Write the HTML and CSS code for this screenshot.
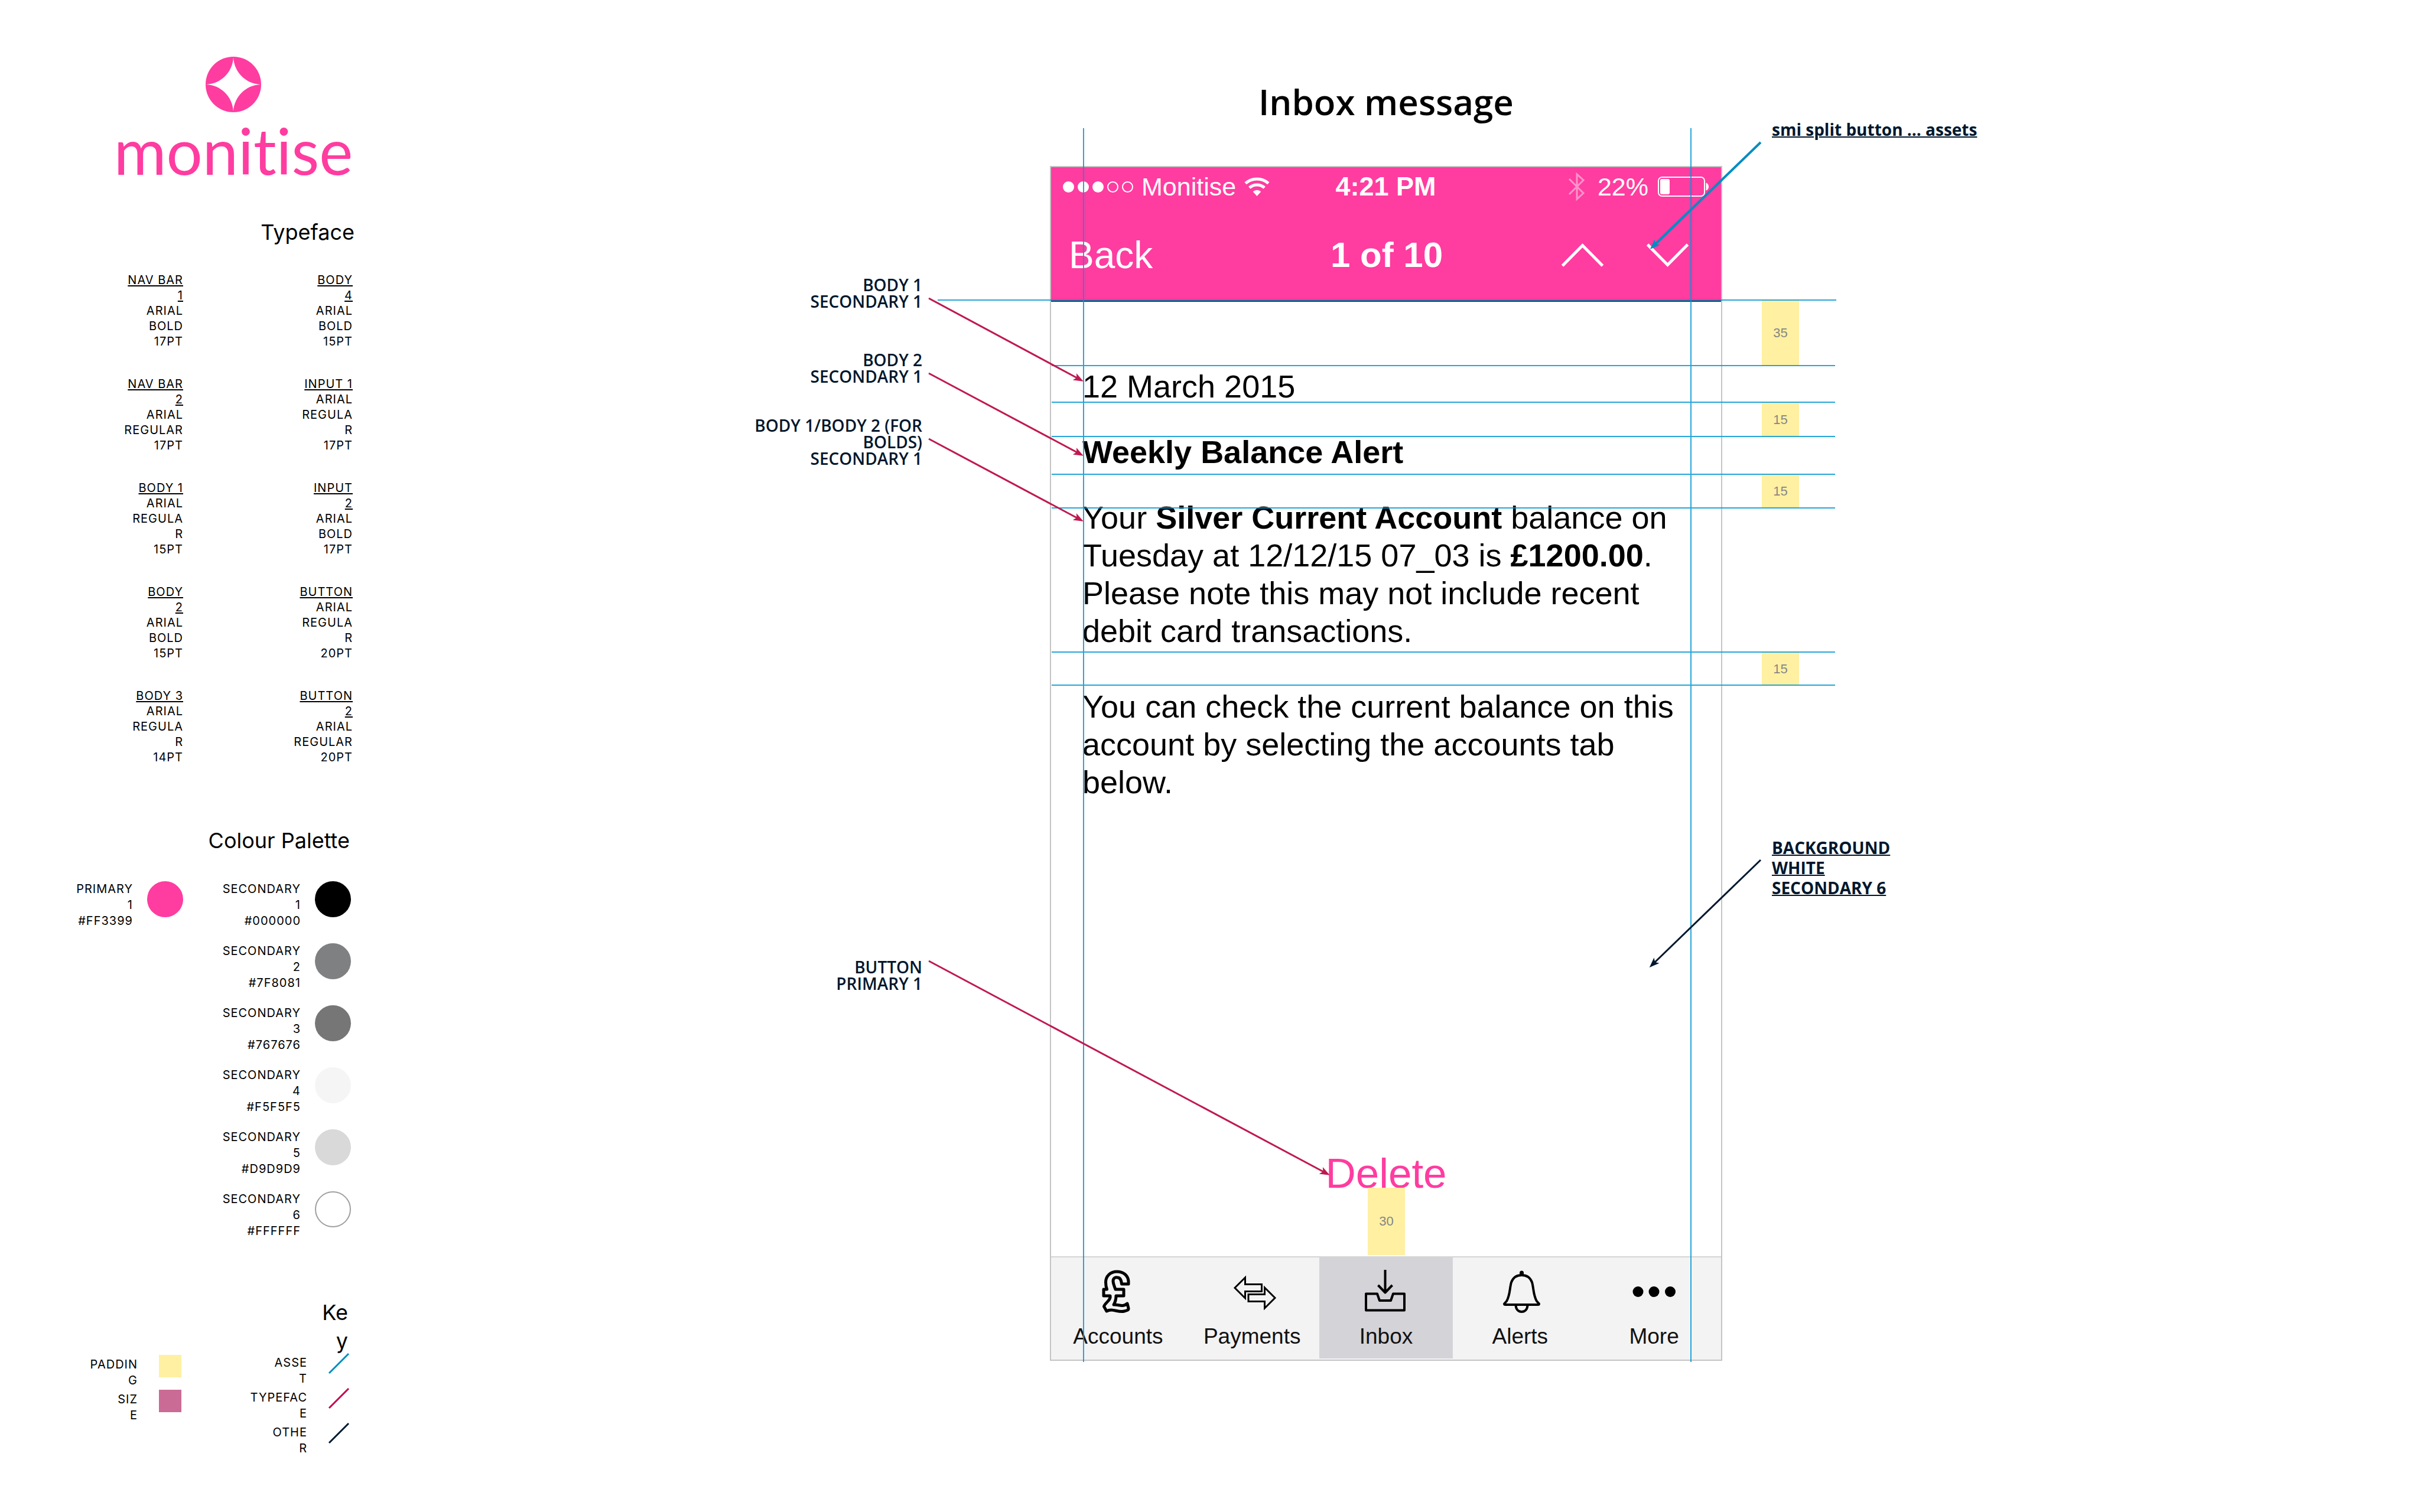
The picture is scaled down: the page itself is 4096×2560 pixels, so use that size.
FILE: index.html
```html
<!DOCTYPE html>
<html lang="en">
<head>
<meta charset="utf-8">
<title>Inbox message</title>
<link rel="stylesheet" href="styles.css">
</head>
<body>
<aside class="guide">
  <div class="brand">
    <svg class="brand-mark" viewBox="0 0 94 94" aria-hidden="true"><circle cx="47" cy="47" r="47"/><path d="M47 1C48 26 68 46 93 47C68 48 48 68 47 93C46 68 26 48 1 47C26 46 46 26 47 1Z"/></svg>
    <div class="brand-name">monitise</div>
  </div>

  <section class="typeface">
    <h2>Typeface</h2>
    <div class="specimens">
      <p><u>NAV BAR<br>1</u><br>ARIAL<br>BOLD<br>17PT</p>
      <p><u>BODY<br>4</u><br>ARIAL<br>BOLD<br>15PT</p>
      <p><u>NAV BAR<br>2</u><br>ARIAL<br>REGULAR<br>17PT</p>
      <p><u>INPUT 1</u><br>ARIAL<br>REGULA<br>R<br>17PT</p>
      <p><u>BODY 1</u><br>ARIAL<br>REGULA<br>R<br>15PT</p>
      <p><u>INPUT<br>2</u><br>ARIAL<br>BOLD<br>17PT</p>
      <p><u>BODY<br>2</u><br>ARIAL<br>BOLD<br>15PT</p>
      <p><u>BUTTON</u><br>ARIAL<br>REGULA<br>R<br>20PT</p>
      <p><u>BODY 3</u><br>ARIAL<br>REGULA<br>R<br>14PT</p>
      <p><u>BUTTON<br>2</u><br>ARIAL<br>REGULAR<br>20PT</p>
    </div>
  </section>

  <section class="palette">
    <h2>Colour Palette</h2>
    <div class="swatches">
      <ul>
        <li><p>PRIMARY<br>1<br>#FF3399</p><span class="dot primary-1"></span></li>
      </ul>
      <ul>
        <li><p>SECONDARY<br>1<br>#000000</p><span class="dot secondary-1"></span></li>
        <li><p>SECONDARY<br>2<br>#7F8081</p><span class="dot secondary-2"></span></li>
        <li><p>SECONDARY<br>3<br>#767676</p><span class="dot secondary-3"></span></li>
        <li><p>SECONDARY<br>4<br>#F5F5F5</p><span class="dot secondary-4"></span></li>
        <li><p>SECONDARY<br>5<br>#D9D9D9</p><span class="dot secondary-5"></span></li>
        <li><p>SECONDARY<br>6<br>#FFFFFF</p><span class="dot secondary-6"></span></li>
      </ul>
    </div>
  </section>

  <section class="key">
    <h2>Ke<br>y</h2>
    <div class="key-columns">
      <ul class="key-boxes">
        <li><p>PADDIN<br>G</p><span class="box box-padding"></span></li>
        <li><p>SIZ<br>E</p><span class="box box-size"></span></li>
      </ul>
      <ul>
        <li><p>ASSE<br>T</p><svg class="stroke stroke-asset" viewBox="0 0 35 35"><path d="M1 31L34 -2"/></svg></li>
        <li><p>TYPEFAC<br>E</p><svg class="stroke stroke-typeface" viewBox="0 0 35 35"><path d="M1 31L34 -2"/></svg></li>
        <li><p>OTHE<br>R</p><svg class="stroke stroke-other" viewBox="0 0 35 35"><path d="M1 31L34 -2"/></svg></li>
      </ul>
    </div>
  </section>
</aside>

<main class="board">
  <h1>Inbox message</h1>
  <div class="stage">
    <div class="phone">
      <header class="phone-header">
        <div class="status">
          <div class="status-left">
            <div class="signal"><i class="on"></i><i class="on"></i><i class="on"></i><i></i><i></i></div>
            <span>Monitise</span>
            <svg class="wifi" viewBox="0 0 43 33" aria-hidden="true"><path class="arc" d="M2.1 10.4A29 29 0 0 1 40.9 10.4M8.8 17.9A19 19 0 0 1 34.2 17.9"/><path class="core" d="M21.5 32L14.6 24.4A10.4 10.4 0 0 1 28.4 24.4Z"/></svg>
          </div>
          <span class="clock">4:21 PM</span>
          <div class="status-right">
            <svg class="bluetooth" viewBox="0 0 28 48" aria-hidden="true"><path d="M2 11L26 35L15 45V3L26 13L2 37"/></svg>
            <span class="charge">22%</span>
            <svg class="battery" viewBox="0 0 86 34" aria-hidden="true"><rect class="shell" x="1" y="1" width="78" height="32" rx="6"/><rect class="level" x="4" y="4" width="16" height="26" rx="3"/><path class="level" d="M81.500 10.500C84 11 86 14 86 17S84 23 81.500 23.500Z"/></svg>
          </div>
        </div>
        <div class="navbar">
          <button class="back" type="button">Back</button>
          <span class="count">1 of 10</span>
          <div class="split">
            <button type="button" aria-label="Previous message"><svg viewBox="0 0 73 40"><path d="M2.500 38L36.500 3.500L70.500 38"/></svg></button>
            <button type="button" aria-label="Next message"><svg viewBox="0 0 73 40"><path d="M2.500 2L36.500 36.500L70.500 2"/></svg></button>
          </div>
        </div>
      </header>
      <article class="message">
        <p>12 March 2015</p>
        <p class="subject">Weekly Balance Alert</p>
        <p>Your <b>Silver Current Account</b> balance on<br>Tuesday at 12/12/15 07_03 is <b>£1200.00</b>.<br>Please note this may not include recent<br>debit card transactions.</p>
        <p class="footnote">You can check the current balance on this<br>account by selecting the accounts tab<br>below.</p>
        <button class="delete" type="button">Delete</button>
      </article>
      <nav class="tabs">
        <button type="button"><svg class="icon icon-pound" viewBox="0 0 80 72"><path d="M58 23V18C57 8 49 2 38.500 2C27 2 19.500 10 19.500 20C19.500 25 20 28 21.500 32H16V43H27C29 50 18 55 16.500 61L21 69C31 63 40 72 51 69C56 68 58.500 67 58 64L56 56C48 63 41 57 33 58C36 53 37 48 37 43H50V32H36C34 27 32 22 32 18C32 13 36 11 39 12C44 12 46 17 46.500 23Z"/></svg><span>Accounts</span></button>
        <button type="button"><svg class="icon icon-transfer" viewBox="0 0 80 72"><path d="M11 29.500L28.500 12V23.500H56.500V35.500H28.500V47ZM34 40.500H61.500V29L79 46.500L61.500 64V52.500H34Z"/></svg><span>Payments</span></button>
        <button type="button" class="selected"><svg class="icon icon-inbox" viewBox="0 0 80 72"><path d="M38.500 -1V37M26.500 25L38.500 37.500L50.500 25M6 39.500H25L29 51H48L52 39.500H71V67.500H6Z"/></svg><span>Inbox</span></button>
        <button type="button"><svg class="icon icon-bell" viewBox="0 0 80 72"><path d="M42.500 8C33 8 28 12 25 20C22 30 23 42 17 52L13 56.500C13 57.500 14 58 15 58H70C71 58 72 57.500 72 56.500L68 52C62 42 63 30 60 20C57 12 52 8 42.500 8ZM32.500 59C33 66 37 70 42.500 70S52 66 52.500 59"/><path class="knob" d="M42.500 6V4"/></svg><span>Alerts</span></button>
        <button type="button"><svg class="icon icon-more" viewBox="0 0 80 72"><circle cx="12.500" cy="36" r="9"/><circle cx="39.500" cy="36" r="9"/><circle cx="67" cy="36" r="9"/></svg><span>More</span></button>
      </nav>
    </div>

    <span class="spacer spacer-a">35</span>
    <span class="spacer spacer-b">15</span>
    <span class="spacer spacer-c">15</span>
    <span class="spacer spacer-d">15</span>
    <span class="spacer spacer-e">30</span>

    <svg class="overlay" viewBox="0 0 1138 2023" aria-hidden="true">
      <defs>
        <marker id="head-type" markerUnits="userSpaceOnUse" markerWidth="20" markerHeight="16" refX="8" refY="8" orient="auto"><path class="fill-type" d="M18 8L1 1.500L5 8L1 14.500Z"/></marker>
        <marker id="head-asset" markerUnits="userSpaceOnUse" markerWidth="20" markerHeight="16" refX="8" refY="8" orient="auto"><path class="fill-asset" d="M18 8L1 1.500L5 8L1 14.500Z"/></marker>
        <marker id="head-other" markerUnits="userSpaceOnUse" markerWidth="20" markerHeight="16" refX="8" refY="8" orient="auto"><path class="fill-other" d="M18 8L1 1.500L5 8L1 14.500Z"/></marker>
      </defs>
      <path class="rule" d="M57 -64V2025M1085 -64V2025M-190 227H1331M3 338H1329M3 400H1329M3 458H1329M3 522H1329M3 579H1329M3 823H1329M3 879H1329"/>
      <path class="arrow-type" d="M-205 224L48 360"/>
      <path class="arrow-type" d="M-205 351L48 486"/>
      <path class="arrow-type" d="M-205 462L48 597"/>
      <path class="arrow-type" d="M-205 1346L465 1704"/>
      <path class="arrow-asset" d="M1203 -40L1023 134"/>
      <path class="arrow-other" d="M1203 1175L1022 1350"/>
    </svg>

    <p class="note note-body-1">BODY 1<br>SECONDARY 1</p>
    <p class="note note-body-2">BODY 2<br>SECONDARY 1</p>
    <p class="note note-bolds">BODY 1/BODY 2 (FOR<br>BOLDS)<br>SECONDARY 1</p>
    <p class="note note-button">BUTTON<br>PRIMARY 1</p>
    <a class="ref ref-split" href="#assets">smi split button ... assets</a>
    <p class="ref ref-background">BACKGROUND<br>WHITE<br>SECONDARY 6</p>
  </div>
</main>
</body>
</html>
```
FILE: styles.css
```css
* { box-sizing: border-box; }

:root {
  --pink: #ff3ca0;
  --navy: #00172d;
  --asset: #008cc3;
  --type: #c0194f;
  --yellow: #fff0a2;
}

body {
  margin: 0;
  display: flex;
  align-items: flex-start;
  background: #fff;
  color: #000;
  font-family: Inter, sans-serif;
}

h1, h2, p, ul { margin: 0; padding: 0; font-weight: 400; }
ul { list-style: none; }
button { margin: 0; padding: 0; border: 0; background: none; color: inherit; font: inherit; }
svg { display: block; overflow: visible; fill: none; flex: none; }

/* Style guide column */
.guide { flex: 0 0 600px; padding-top: 96px; text-align: right; font-size: 20px; line-height: 26px; letter-spacing: 1px; }
.guide h2 { font-size: 36px; line-height: 48px; letter-spacing: normal; }
.guide u { text-decoration-thickness: 2px; text-underline-offset: 2px; }

.brand { display: flex; flex-direction: column; align-items: center; width: 410px; margin-left: auto; color: var(--pink); }
.brand-mark { width: 94px; height: 94px; fill: var(--pink); }
.brand-mark path { fill: #fff; }
.brand-name { margin-top: 11px; font-family: Lato, sans-serif; font-size: 108px; line-height: 106px; letter-spacing: normal; font-variant-ligatures: none; }

.typeface { margin-top: 62px; }
.specimens { display: grid; grid-template-columns: 1fr 287px; row-gap: 46px; margin-top: 44px; padding-right: 3px; }

.palette { margin-top: 104px; padding-right: 6px; line-height: 27px; }
.palette h2, .key h2 { padding-right: 2px; }
.swatches { display: grid; grid-template-columns: 1fr 284px; margin-top: 45px; }
.swatches ul { display: flex; flex-direction: column; gap: 24px; }
.swatches li { display: flex; justify-content: flex-end; gap: 24px; }
.dot { flex: none; width: 61px; height: 61px; border-radius: 50%; }
.primary-1 { background: var(--pink); }
.secondary-1 { background: #000; }
.secondary-2 { background: #7f8081; }
.secondary-3 { background: #767676; }
.secondary-4 { background: #f5f5f5; }
.secondary-5 { background: #d9d9d9; }
.secondary-6 { border: 2px solid #a0a0a0; background: #fff; }

.key { margin-top: 100px; padding-right: 9px; line-height: 27px; }
.key-columns { display: grid; grid-template-columns: 1fr 284px; }
.key ul { display: flex; flex-direction: column; gap: 5px; }
.key li { display: flex; justify-content: flex-end; gap: 36px; }
.key-boxes p { padding-top: 3px; margin-bottom: -3px; }
.box { flex: none; width: 38px; height: 38px; }
.box-padding { background: var(--yellow); }
.box-size { background: #ca6b95; }
.stroke { width: 35px; height: 35px; stroke-width: 3; }
.stroke-asset { stroke: var(--asset); }
.stroke-typeface { stroke: #c4004f; }
.stroke-other { stroke: var(--navy); }

/* Annotated screen */
.board { flex: 1; display: flex; flex-direction: column; align-items: center; padding: 132px 4px 0 0; }
.board h1 { font-family: "Open Sans", sans-serif; font-size: 60px; font-weight: 600; line-height: 80px; }
.stage { position: relative; width: 1138px; margin-top: 69px; font-family: "Liberation Sans", Arial, sans-serif; }

.phone { display: flex; flex-direction: column; min-height: 2023px; border: 2px solid #c4c4c4; background: #fff; }
.phone-header { background: var(--pink); border-bottom: 2px solid #4c2b40; color: #fff; }
.status, .navbar { display: grid; grid-template-columns: 1fr auto 1fr; align-items: center; }
.status { height: 66px; padding: 0 21px 0 20px; font-size: 43px; line-height: 48px; }
.status-left { display: flex; align-items: center; gap: 14px; }
.signal { display: flex; gap: 6px; }
.signal i { width: 19px; height: 19px; border: 2px solid #fff; border-radius: 50%; }
.signal .on { background: #fff; }
.wifi { width: 43px; height: 33px; }
.wifi .arc { stroke: #fff; stroke-width: 5; }
.wifi .core { fill: #fff; }
.clock { font-size: 45px; font-weight: 700; }
.status-right { display: flex; align-items: center; justify-content: flex-end; gap: 16px; }
.bluetooth { width: 28px; height: 48px; margin-right: 6px; stroke: #fff; stroke-width: 3; opacity: .45; }
.battery { width: 86px; height: 34px; }
.battery .shell { stroke: #fff; stroke-width: 2; }
.battery .level { fill: #fff; }
.navbar { height: 160px; padding: 6px 28px 0 30px; }
.back { justify-self: start; font-size: 64px; line-height: 80px; }
.count { font-size: 60px; font-weight: 700; line-height: 80px; }
.split { display: flex; justify-content: flex-end; gap: 71px; padding-right: 26px; }
.split svg { width: 73px; height: 40px; stroke: #fff; stroke-width: 5; }

.message { flex: 1; display: flex; flex-direction: column; padding: 111px 53px 104px; font-size: 54px; line-height: 64px; white-space: nowrap; }
.message p + p { margin-top: 47px; }
.message .subject { font-weight: 700; }
.message p + .footnote { margin-top: 64px; }
.delete { align-self: center; margin-top: auto; color: var(--pink); font-size: 71px; line-height: 72px; }

.tabs { display: grid; grid-template-columns: repeat(5, 1fr); padding-bottom: 2px; border-top: 2px solid #d5d5d5; background: #f3f3f3; font-size: 37px; line-height: 40px; }
.tabs button { display: flex; flex-direction: column; align-items: center; gap: 20px; padding: 22px 0 17px; color: #111; }
.tabs .selected { background: #d4d3d8; }
.icon { width: 80px; height: 72px; stroke: #000; stroke-linejoin: round; }
.icon-pound { stroke-width: 5; }
.icon-transfer { stroke-width: 3; stroke-linejoin: miter; }
.icon-inbox { stroke-width: 4; }
.icon-bell { stroke-width: 4; }
.icon-bell .knob { stroke-width: 7; stroke-linecap: round; }
.icon-more { fill: #000; stroke: none; }

/* Measurements, rules and notes laid over the screen */
.spacer { position: absolute; left: 1205px; width: 63px; display: flex; align-items: center; justify-content: center; background: var(--yellow); color: #868686; font-size: 22px; line-height: 24px; }
.spacer-a { top: 228px; height: 110px; }
.spacer-b { top: 401px; height: 57px; }
.spacer-c { top: 523px; height: 56px; }
.spacer-d { top: 824px; height: 55px; }
.spacer-e { left: 538px; top: 1730px; height: 114px; }

.overlay { position: absolute; left: 0; top: 0; width: 1138px; height: 2023px; pointer-events: none; }
.rule { stroke: #0096d2; stroke-width: 2; opacity: .85; }
.arrow-type { stroke: var(--type); stroke-width: 3; marker-end: url(#head-type); }
.arrow-asset { stroke: var(--asset); stroke-width: 4; marker-end: url(#head-asset); }
.arrow-other { stroke: var(--navy); stroke-width: 3; marker-end: url(#head-other); }
.fill-type { fill: var(--type); }
.fill-asset { fill: var(--asset); }
.fill-other { fill: var(--navy); }

.note, .ref { position: absolute; color: var(--navy); font-family: "Open Sans", sans-serif; font-size: 28px; white-space: nowrap; }
.note { right: 1354px; text-align: right; font-weight: 600; line-height: 28px; }
.note-body-1 { top: 187px; }
.note-body-2 { top: 314px; }
.note-bolds { top: 425px; }
.note-button { top: 1342px; }
.ref { left: 1222px; font-weight: 700; line-height: 34px; text-decoration: underline; text-decoration-thickness: 2px; }
.ref-split { top: -79px; }
.ref-background { top: 1137px; }
```
